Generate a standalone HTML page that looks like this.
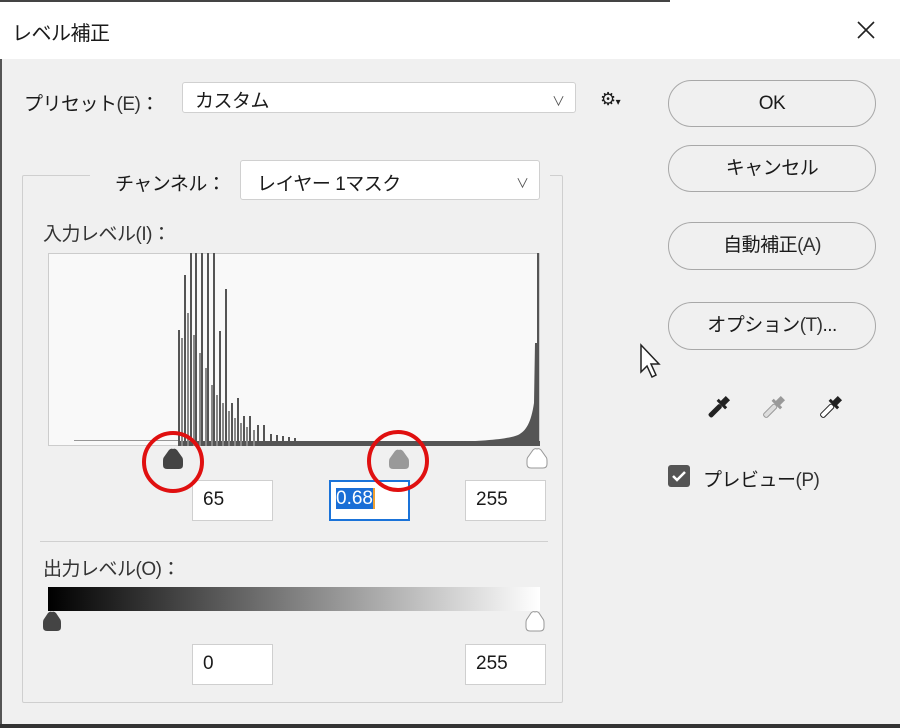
<!DOCTYPE html>
<html><head><meta charset="utf-8"><style>
*{box-sizing:border-box;margin:0;padding:0}
body{width:900px;height:728px;overflow:hidden;background:#f0f0f0;font-family:"Liberation Sans","Noto Sans CJK JP",sans-serif;color:#1a1a1a;position:relative}
.a{position:absolute}
.title{left:0;top:0;width:900px;height:59px;background:#fff}
.t{font-size:19px;white-space:nowrap;letter-spacing:-0.5px}
.combo{background:#fff;border:1px solid #d0d0d0;border-radius:3px}
.btn{border:1px solid #a8a8a8;border-radius:24px;background:#f0f0f0;text-align:center;font-size:19px;letter-spacing:-0.5px}
.inp{background:#fff;border:1px solid #cfcfcf;font-size:19px;padding:8px 0 0 10px}
.o{color:#333}
.chev{position:absolute;right:10px;top:8px;font-size:13px;color:#555}
</style></head><body>
<div class="a title"></div>
<div class="a" style="left:0;top:0;width:670px;height:2px;background:#444"></div>
<div class="a t" style="left:12px;top:17px;font-size:20px">レベル補正</div>
<svg class="a" style="left:856px;top:20px" width="20" height="20"><path d="M2 2L18 18M18 2L2 18" stroke="#222" stroke-width="1.6"/></svg>
<div class="a" style="left:0;top:59px;width:2px;height:669px;background:#555"></div>
<div class="a" style="left:0;top:724px;width:900px;height:4px;background:#333"></div>

<div class="a t" style="left:24px;top:89px">プリセット<span class="o">(E)</span>：</div>
<div class="a combo" style="left:182px;top:82px;width:394px;height:31px"><span class="t a" style="left:12px;top:3px">カスタム</span><span class="chev">∨</span></div>
<div class="a t" style="left:600px;top:89px;font-size:18px">⚙<span style="font-size:10px">▾</span></div>

<div class="a btn" style="left:668px;top:80px;width:208px;height:47px;line-height:45px">OK</div>
<div class="a btn" style="left:668px;top:145px;width:208px;height:47px;line-height:45px">キャンセル</div>
<div class="a btn" style="left:668px;top:222px;width:208px;height:48px;line-height:46px">自動補正<span class="o">(A)</span></div>
<div class="a btn" style="left:668px;top:302px;width:208px;height:48px;line-height:46px">オプション<span class="o">(T)</span>...</div>

<svg class="a" style="left:638px;top:342px" width="26" height="40"><path d="M3 3L3 30L9 24L14 35L18 33L13 22L21 22Z" fill="#fff" stroke="#222" stroke-width="1.5"/></svg>

<svg class="a" style="left:700px;top:392px" width="160" height="34">
<g transform="translate(18,16) rotate(45)"><rect x="-3" y="-14" width="6" height="8" fill="#222"/><rect x="-6" y="-7" width="12" height="3" fill="#222"/><rect x="-2.5" y="-4" width="5" height="16" rx="2" fill="#222"/></g>
<g transform="translate(73,16) rotate(45)"><rect x="-3" y="-14" width="6" height="8" fill="#999"/><rect x="-6" y="-7" width="12" height="3" fill="#999"/><rect x="-2.5" y="-4" width="5" height="16" rx="2" fill="#ddd" stroke="#999"/></g>
<g transform="translate(130,16) rotate(45)"><rect x="-3" y="-14" width="6" height="8" fill="#222"/><rect x="-6" y="-7" width="12" height="3" fill="#222"/><rect x="-2.5" y="-4" width="5" height="16" rx="2" fill="#fff" stroke="#222"/></g>
</svg>
<div class="a" style="left:668px;top:465px;width:22px;height:22px;background:#555;border-radius:3px"></div>
<svg class="a" style="left:668px;top:465px" width="22" height="22"><path d="M5 11L9 15L17 7" stroke="#fff" stroke-width="2.5" fill="none"/></svg>
<div class="a t" style="left:703px;top:465px">プレビュー<span class="o">(P)</span></div>

<!-- group box -->
<div class="a" style="left:22px;top:175px;width:541px;height:528px;border:1px solid #cfcfcf;border-radius:2px"></div>
<div class="a" style="left:90px;top:170px;width:460px;height:12px;background:#f0f0f0"></div>
<div class="a t" style="left:115px;top:169px">チャンネル：</div>
<div class="a combo" style="left:240px;top:160px;width:300px;height:40px"><span class="t a" style="left:16px;top:8px">レイヤー 1マスク</span><span class="chev" style="top:12px">∨</span></div>
<div class="a t" style="left:43px;top:219px;color:#333">入力レベル<span class="o">(I)</span>：</div>

<svg class="a" style="left:48px;top:253px" width="493" height="194">
<rect x="0.5" y="0.5" width="491" height="192" fill="#f9f9f9" stroke="#ccc"/>
<g fill="#555">
<rect x="130" y="77" width="2" height="116"/><rect x="136" y="22" width="2" height="171"/>
<rect x="142" y="0" width="2" height="193"/><rect x="147" y="0" width="2" height="193"/><rect x="153" y="0" width="2" height="193"/><rect x="159" y="0" width="2" height="193"/><rect x="165" y="0" width="2" height="193"/>
<rect x="171" y="78" width="2" height="115"/><rect x="177" y="36" width="2" height="157"/>
<rect x="183" y="150" width="2" height="43"/><rect x="189" y="145" width="2" height="48"/>
<rect x="195" y="163" width="2" height="30"/><rect x="201" y="163" width="2" height="30"/>
<rect x="209" y="172" width="2" height="21"/><rect x="215" y="172" width="2" height="21"/>
<rect x="222" y="181" width="2" height="12"/><rect x="228" y="182" width="2" height="11"/><rect x="234" y="183" width="2" height="10"/><rect x="240" y="184" width="2" height="9"/><rect x="246" y="185" width="2" height="8"/>
<rect x="26" y="187" width="105" height="1" opacity=".6"/>
<rect x="130" y="188" width="362" height="5"/>
<path d="M400 193 L400 189 C440 188 460 186 470 182 C478 178 483 170 486 150 L487 90 L489 90 L489 0 L491 0 L491 193Z"/>
</g>
<g fill="#888">
<rect x="133" y="85" width="2" height="108"/><rect x="139" y="60" width="2" height="133"/><rect x="145" y="82" width="2" height="111"/><rect x="151" y="100" width="2" height="93"/><rect x="157" y="115" width="2" height="78"/><rect x="163" y="132" width="2" height="61"/><rect x="168" y="142" width="2" height="51"/><rect x="174" y="150" width="2" height="43"/><rect x="180" y="158" width="2" height="35"/><rect x="186" y="165" width="2" height="28"/><rect x="192" y="170" width="2" height="23"/><rect x="198" y="174" width="2" height="19"/><rect x="205" y="177" width="2" height="16"/>
</g>
</svg>
<svg class="a" style="left:150px;top:428px" width="400" height="120">
<path d="M23 21Q25 20 27 22L32 29Q33 30 33 33V37Q33 41 29 41H17Q13 41 13 37V33Q13 30 14 29L19 22Q21 20 23 21Z" fill="#444"/>
<path d="M249 22Q251 21 253 23L258 30Q259 31 259 34V37Q259 41 255 41H243Q239 41 239 37V34Q239 31 240 30L245 23Q247 21 249 22Z" fill="#999"/>
<path d="M387 21Q389 20 391 22L396 29Q397 30 397 33V36Q397 40 393 40H381Q377 40 377 36V33Q377 30 378 29L383 22Q385 20 387 21Z" fill="#fff" stroke="#999"/>
</svg>
<div class="a inp" style="left:192px;top:480px;width:81px;height:41px">65</div>
<div class="a inp" style="left:329px;top:480px;width:81px;height:41px;border:2px solid #1a73d9;padding:6px 0 0 5px"><span style="background:#1a6ed6;color:#fff">0.68</span><span style="border-left:2px solid #f0a030"></span></div>
<div class="a inp" style="left:465px;top:480px;width:81px;height:41px">255</div>
<svg class="a" style="left:140px;top:425px" width="300" height="80"><circle cx="33" cy="37" r="29" fill="none" stroke="#e01010" stroke-width="4"/><circle cx="258" cy="36" r="29" fill="none" stroke="#e01010" stroke-width="4"/></svg>

<div class="a" style="left:40px;top:541px;width:508px;height:1px;background:#d0d0d0"></div>
<div class="a t" style="left:43px;top:554px;color:#333">出力レベル<span class="o">(O)</span>：</div>
<div class="a" style="left:48px;top:587px;width:492px;height:24px;background:linear-gradient(to right,#000,#fff)"></div>
<svg class="a" style="left:38px;top:610px" width="520" height="30">
<path d="M14 2Q16 1 18 3L22 9Q23 10 23 13V17Q23 21 19 21H9Q5 21 5 17V13Q5 10 6 9L10 3Q12 1 14 2Z" fill="#444"/>
<path d="M497 2Q499 1 501 3L505 9Q506 10 506 13V17Q506 21 502 21H492Q488 21 488 17V13Q488 10 489 9L493 3Q495 1 497 2Z" fill="#fff" stroke="#999"/>
</svg>
<div class="a inp" style="left:192px;top:644px;width:81px;height:41px">0</div>
<div class="a inp" style="left:465px;top:644px;width:81px;height:41px">255</div>
</body></html>
